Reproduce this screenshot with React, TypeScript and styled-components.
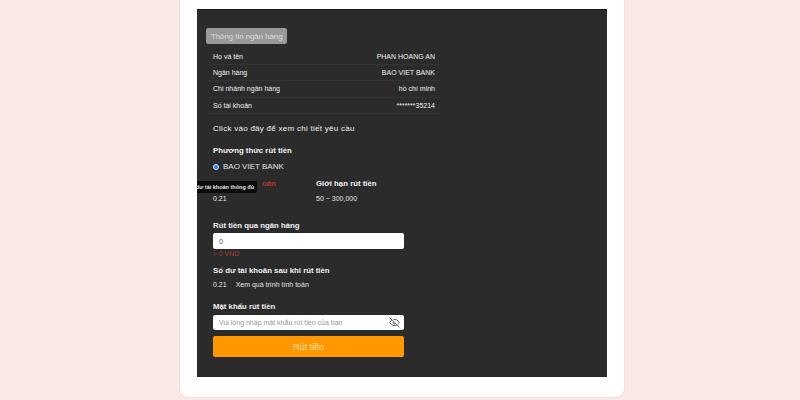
import React from "react";
import styled, { createGlobalStyle } from "styled-components";
import { EyeOff } from "lucide-react";

const Global = createGlobalStyle`
  html, body { margin: 0; padding: 0; height: 400px; overflow: hidden; background: #fbe9e8; font-family: "Liberation Sans", Arial, sans-serif; }
  * { box-sizing: border-box; }
`;
const Page = styled.div`display: flex; justify-content: center; height: 400px; padding-left: 4px;`;
const Card = styled.div`
  width: 444px; height: 397px; background: #fff; border-radius: 0 0 8px 8px; padding: 9px 17px 20px;
  box-shadow: 0 0 2px rgba(160,120,120,.35);
`;
const Dark = styled.main`
  position: relative; width: 410px; height: 368px; background: #2b2b2b; color: #eee;
  padding: 18px 0 0 9px; font-size: 7px; border-top: 1px solid #151515;
`;
const Tag = styled.div`
  width: 81px; height: 16px; background: #999; border-radius: 2px; color: #ddd; display: flex; align-items: center; padding-left: 5px; font-size: 7.8px;
`;
const Table = styled.div`width: 232px; margin-left: 2px;`;
const Row = styled.div`
  height: 16.4px; display: flex; justify-content: space-between; align-items: center; padding: 0 5px; border-bottom: 1px solid #333; color: #f0f0f0;
  &:first-child { margin-top: 4.5px; }
`;
const Form = styled.div`padding-left: 7px; width: 198px;`;
const Hint = styled.div`margin-top: 10px; font-size: 8px; letter-spacing: .27px; color: #f0f0f0;`;
const Heading = styled.div<{ $top: number }>`font-weight: bold; font-size: 7.8px; margin-top: ${p => p.$top}px; color: #f2f2f2;`;
const Radio = styled.div`display: flex; align-items: center; gap: 4px; margin-top: 7px; font-size: 8px; color: #e4e4e4;`;
const Dot = styled.span`width: 6px; height: 6px; border-radius: 50%; background: #2f7fe0; border: 1.5px solid #cfe2fb;`;
const Columns = styled.div`display: flex; margin-top: 8px;`;
const Column = styled.div`width: 103px; flex: none;`;
const Danger = styled.div`color: #b0392b; font-weight: bold; font-size: 7.8px; padding-left: 49px;`;
const Value = styled.div`margin-top: 7px; color: #e4e4e4; font-size: 7px;`;
const Tooltip = styled.div`
  position: absolute; left: 0; top: 171px; width: 60px; height: 12px; background: #0a0a0a; color: #e8e8e8; font-size: 5.5px; font-weight: bold;
  display: flex; align-items: center; justify-content: flex-end; padding-right: 3px; border-radius: 0 2px 2px 0; white-space: nowrap;
`;
const Field = styled.div<{ $h: number; $top: number }>`
  height: ${p => p.$h}px; background: #fff; border-radius: 2px; margin-top: ${p => p.$top}px; display: flex; align-items: center; justify-content: space-between; padding: 0 4px 0 6px; color: #555; font-size: 7px;
`;
const Placeholder = styled.span`color: #999;`;
const Converted = styled.div`color: #a33f33; font-size: 7px; margin-top: 1px;`;
const Line = styled.div`margin-top: 6px; display: flex; gap: 9px; color: #e4e4e4; font-size: 7px;`;
const Submit = styled.button`
  display: block; width: 100%; height: 21px; margin-top: 6px; border: 0; border-radius: 2px; background: #ff9800; color: #ffe0b0; font: 9px "Liberation Sans", Arial, sans-serif;
`;

const rows = [
  ["Họ và tên", "PHAN HOANG AN"],
  ["Ngân hàng", "BAO VIET BANK"],
  ["Chi nhánh ngân hàng", "hồ chí minh"],
  ["Số tài khoản", "*******35214"],
];

export default function App() {
  return (
    <Page>
      <Global />
      <Card>
        <Dark>
          <Tag>Thông tin ngân hàng</Tag>
          <Table>
            {rows.map(([a, b]) => (
              <Row key={a}><span>{a}</span><span>{b}</span></Row>
            ))}
          </Table>
          <Form>
            <Hint>Click vào đây để xem chi tiết yêu cầu</Hint>
            <Heading $top={13}>Phương thức rút tiền</Heading>
            <Radio><Dot />BAO VIET BANK</Radio>
            <Columns>
              <Column>
                <Danger>oản</Danger>
                <Value>0.21</Value>
              </Column>
              <Column>
                <Heading $top={0}>Giới hạn rút tiền</Heading>
                <Value>50 ~ 300,000</Value>
              </Column>
            </Columns>
            <Heading $top={19}>Rút tiền qua ngân hàng</Heading>
            <Field $h={16} $top={3}>0</Field>
            <Converted>≈ 0 VND</Converted>
            <Heading $top={9}>Số dư tài khoản sau khi rút tiền</Heading>
            <Line><span>0.21</span><span>Xem quá trình tính toán</span></Line>
            <Heading $top={14}>Mật khẩu rút tiền</Heading>
            <Field $h={15} $top={4}>
              <Placeholder>Vui lòng nhập mật khẩu rút tiền của bạn</Placeholder>
              <EyeOff size={11} color="#555" strokeWidth={2} />
            </Field>
            <Submit>Rút tiền</Submit>
          </Form>
          <Tooltip>dư tài khoản thông đủ</Tooltip>
        </Dark>
      </Card>
    </Page>
  );
}
